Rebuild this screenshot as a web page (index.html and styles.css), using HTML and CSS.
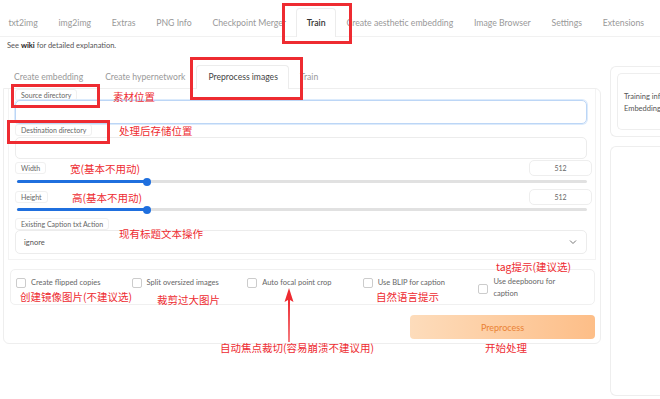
FILE: index.html
```html
<!DOCTYPE html>
<html lang="en">
<head>
  <meta charset="UTF-8" />
  <meta name="viewport" content="width=device-width, initial-scale=1.0"/>
  <title>Stable Diffusion - Train</title>
  <link rel="stylesheet" href="styles.css">
</head>
<body>
  <nav class="tabs">
    <span class="tab">txt2img</span>
    <span class="tab">img2img</span>
    <span class="tab">Extras</span>
    <span class="tab">PNG Info</span>
    <span class="tab">Checkpoint Merger</span>
    <span class="tab active">Train</span>
    <span class="tab">Create aesthetic embedding</span>
    <span class="tab">Image Browser</span>
    <span class="tab">Settings</span>
    <span class="tab">Extensions</span>
  </nav>
  <p class="hint">See <b>wiki</b> for detailed explanation.</p>

  <div class="train">
    <div class="main-col">
      <div class="subtabs">
        <span class="subtab">Create embedding</span>
        <span class="subtab">Create hypernetwork</span>
        <span class="subtab active">Preprocess images</span>
        <span class="subtab">Train</span>
      </div>

      <div class="panel">
        <div class="form-box">
          <div class="field">
            <span class="label">Source directory</span>
            <div class="textbox focus"></div>
          </div>
          <div class="field">
            <span class="label">Destination directory</span>
            <div class="textbox"></div>
          </div>
          <div class="slider-field">
            <div class="slider-head">
              <span class="label">Width</span>
              <span class="number">512</span>
            </div>
            <div class="track"><div class="fill" style="width: 130px"></div></div>
          </div>
          <div class="slider-field">
            <div class="slider-head">
              <span class="label">Height</span>
              <span class="number">512</span>
            </div>
            <div class="track"><div class="fill" style="width: 130px"></div></div>
          </div>
          <div class="field caption">
            <span class="label">Existing Caption txt Action</span>
            <div class="select">
              <span>ignore</span>
              <svg width="8" height="6" viewBox="0 0 8 6"><path d="M1 1.5 L4 4.5 L7 1.5" fill="none" stroke="#777" stroke-width="1"/></svg>
            </div>
          </div>
        </div>

        <div class="checks">
          <label class="check"><span class="box"></span>Create flipped copies</label>
          <label class="check"><span class="box"></span>Split oversized images</label>
          <label class="check"><span class="box"></span>Auto focal point crop</label>
          <label class="check"><span class="box"></span>Use BLIP for caption</label>
          <label class="check"><span class="box"></span>Use deepbooru for<br>caption</label>
        </div>

        <div class="actions">
          <button class="run">Preprocess</button>
        </div>
      </div>
    </div>

    <div class="side-col">
      <div class="side-box">
        <div class="side-inner">Training info<br>Embedding info</div>
      </div>
      <div class="side-box second"></div>
    </div>
  </div>

  <!-- red annotations drawn on top of the screenshot -->
  <div class="notes">
    <div class="mark" style="left:282px; top:3px; width:70px; height:41px"></div>
    <div class="mark" style="left:190px; top:57px; width:113px; height:43px"></div>
    <div class="mark" style="left:11px; top:84px; width:89px; height:24px"></div>
    <div class="mark" style="left:7px; top:120px; width:103px; height:24px"></div>

    <span class="note" style="left:113px; top:89px">素材位置</span>
    <span class="note" style="left:119px; top:123px">处理后存储位置</span>
    <span class="note" style="left:70px; top:161px">宽(基本不用动)</span>
    <span class="note" style="left:72px; top:190px">高(基本不用动)</span>
    <span class="note" style="left:119px; top:226px">现有标题文本操作</span>
    <span class="note" style="left:496px; top:259px">tag提示(建议选)</span>
    <span class="note" style="left:20px; top:289px">创建镜像图片(不建议选)</span>
    <span class="note" style="left:157px; top:292px">裁剪过大图片</span>
    <span class="note" style="left:376px; top:289px">自然语言提示</span>
    <span class="note" style="left:220px; top:340px">自动焦点裁切(容易崩溃不建议用)</span>
    <span class="note" style="left:485px; top:340px">开始处理</span>

    <svg class="arrow" width="12" height="54" viewBox="0 0 12 54">
      <path d="M6 0 L10.5 14 L7 12 L6.6 54 L5.4 54 L5 12 L1.5 14 Z" fill="#ee2b31"/>
    </svg>
  </div>
</body>
</html>
```

FILE: styles.css
```css
body {
  margin: 0;
  width: 660px;
  height: 399px;
  overflow: hidden;
  position: relative;
  font-family: 'Lato', 'Noto Sans', sans-serif;
  background: #fff;
  color: #444;
}

.tabs {
  display: flex;
  align-items: flex-end;
  height: 36px;
  margin-left: -2px;
  border-bottom: 1px solid #f1f1f1;
  white-space: nowrap;
}

.tab {
  padding: 0 9.4px;
  height: 27px;
  line-height: 27px;
  font-size: 8.7px;
  color: #999;
  border: 1px solid transparent;
  border-bottom: none;
}

.tab.active {
  color: #333;
  font-weight: 600;
  border-color: #ececec;
  border-radius: 4px 4px 0 0;
  background: #fff;
  margin-bottom: -1px;
  height: 28px;
}

.hint {
  margin: 4px 0 0 7px;
  font-size: 7.5px;
  color: #555;
}

.hint b {
  color: #222;
}

.train {
  display: flex;
  gap: 9px;
  margin-top: 16px;
  padding-left: 3px;
}

.main-col {
  width: 598px;
  flex: none;
}

.subtabs {
  display: flex;
  align-items: flex-end;
  height: 22px;
}

.subtab {
  padding: 0 10px;
  height: 22px;
  line-height: 22px;
  font-size: 8.6px;
  color: #999;
  border: 1px solid transparent;
  border-bottom: none;
}

.subtab.active {
  color: #444;
  border-color: #ececec;
  border-radius: 4px 4px 0 0;
  padding: 0 10px 0 11px;
  height: 23px;
  margin-bottom: -1px;
  background: #fff;
}

.panel {
  border: 1px solid #eee;
  border-radius: 0 6px 6px 6px;
  padding: 0 4px 4px 4px;
}

.form-box {
  border: 1px solid #f3f3f3;
  border-top: none;
  padding: 0 6px 5px 6px;
}

.label {
  display: inline-block;
  box-sizing: border-box;
  height: 12px;
  font-size: 7px;
  color: #666;
  border: 1px solid #f0f0f0;
  border-radius: 3px;
  padding: 0 5px;
  line-height: 10px;
  background: #fff;
}

.field {
  display: flex;
  flex-direction: column;
  align-items: flex-start;
}

.textbox {
  align-self: stretch;
  margin: -1px 2px 0 0;
  height: 22px;
  border: 1px solid #ececec;
  border-radius: 5px;
}

.field + .field .textbox {
  margin-top: 1px;
  height: 20px;
}

.textbox.focus {
  border-color: #bcd6f6;
  box-shadow: 0 0 0 1px #dcebfc;
}

.slider-field {
  margin-top: 1px;
}

.slider-head {
  display: flex;
  justify-content: space-between;
  align-items: center;
  height: 16px;
}

.number {
  box-sizing: border-box;
  width: 63px;
  height: 16px;
  line-height: 14px;
  text-align: center;
  font-size: 7px;
  color: #666;
  border: 1px solid #eee;
  border-radius: 5px;
  margin-right: -3px;
}

.track {
  height: 3px;
  margin: 4px 2px 6px 2px;
  background: #e1e1e1;
  border-radius: 2px;
}

.slider-field + .slider-field .track {
  margin-top: 3px;
}

.fill {
  height: 3px;
  background: #1f6fde;
  border-radius: 2px;
  position: relative;
}

.fill::after {
  content: "";
  position: absolute;
  right: -4px;
  top: -2.5px;
  width: 8px;
  height: 8px;
  border-radius: 50%;
  background: #1f6fde;
}

.field.caption {
  margin-top: 7px;
}

.select {
  align-self: stretch;
  box-sizing: border-box;
  margin: 0 2px 0 0;
  height: 24px;
  border: 1px solid #ececec;
  border-radius: 5px;
  display: flex;
  justify-content: space-between;
  align-items: center;
  padding: 0 9px 0 8px;
  font-size: 7.5px;
  color: #555;
}

.checks {
  margin: 9px 1px 0 2px;
  height: 36px;
  border: 1px solid #f0f0f0;
  border-radius: 5px;
  display: flex;
  align-items: flex-start;
  padding: 7px 0 0 5px;
  box-sizing: border-box;
}

.check {
  width: 117px;
  display: flex;
  align-items: flex-start;
  font-size: 7.5px;
  line-height: 12px;
  color: #666;
}

.check .box {
  flex: none;
  box-sizing: border-box;
  width: 10px;
  height: 10px;
  border: 1px solid #ccc;
  border-radius: 2px;
  margin: 1px 5px 0 0;
}

.check:last-child {
  margin-top: -1px;
}

.check:last-child .box {
  margin-top: 8px;
}

.actions {
  display: flex;
  justify-content: flex-end;
  padding: 10px 1px 0 0;
}

.run {
  width: 185px;
  height: 24px;
  border: none;
  border-radius: 4px;
  background: linear-gradient(90deg, #fddcbb, #fdbe88);
  color: #ea8234;
  font-family: inherit;
  font-size: 9px;
}

.side-col {
  flex: 1;
}

.side-box {
  border: 1px solid #eee;
  border-right: none;
  border-radius: 6px 0 0 6px;
  padding: 6px 0 6px 6px;
  height: 57px;
}

.side-inner {
  border: 1px solid #eee;
  border-right: none;
  border-radius: 5px 0 0 5px;
  height: 57px;
  padding: 17px 0 0 6px;
  box-sizing: border-box;
  font-size: 7.5px;
  line-height: 12px;
  color: #555;
  white-space: nowrap;
  overflow: hidden;
}

.side-box.second {
  margin-top: 9px;
  height: 236px;
}

.notes {
  position: absolute;
  left: 0;
  top: 0;
  width: 660px;
  height: 399px;
  pointer-events: none;
}

.mark {
  position: absolute;
  box-sizing: border-box;
  border: 3px solid #ee2b31;
}

.note {
  position: absolute;
  font-family: 'Noto Sans CJK SC', 'Noto Sans', sans-serif;
  font-size: 10.5px;
  line-height: 16px;
  color: #ee2b31;
  white-space: nowrap;
}

.arrow {
  position: absolute;
  left: 283px;
  top: 288px;
}
```
